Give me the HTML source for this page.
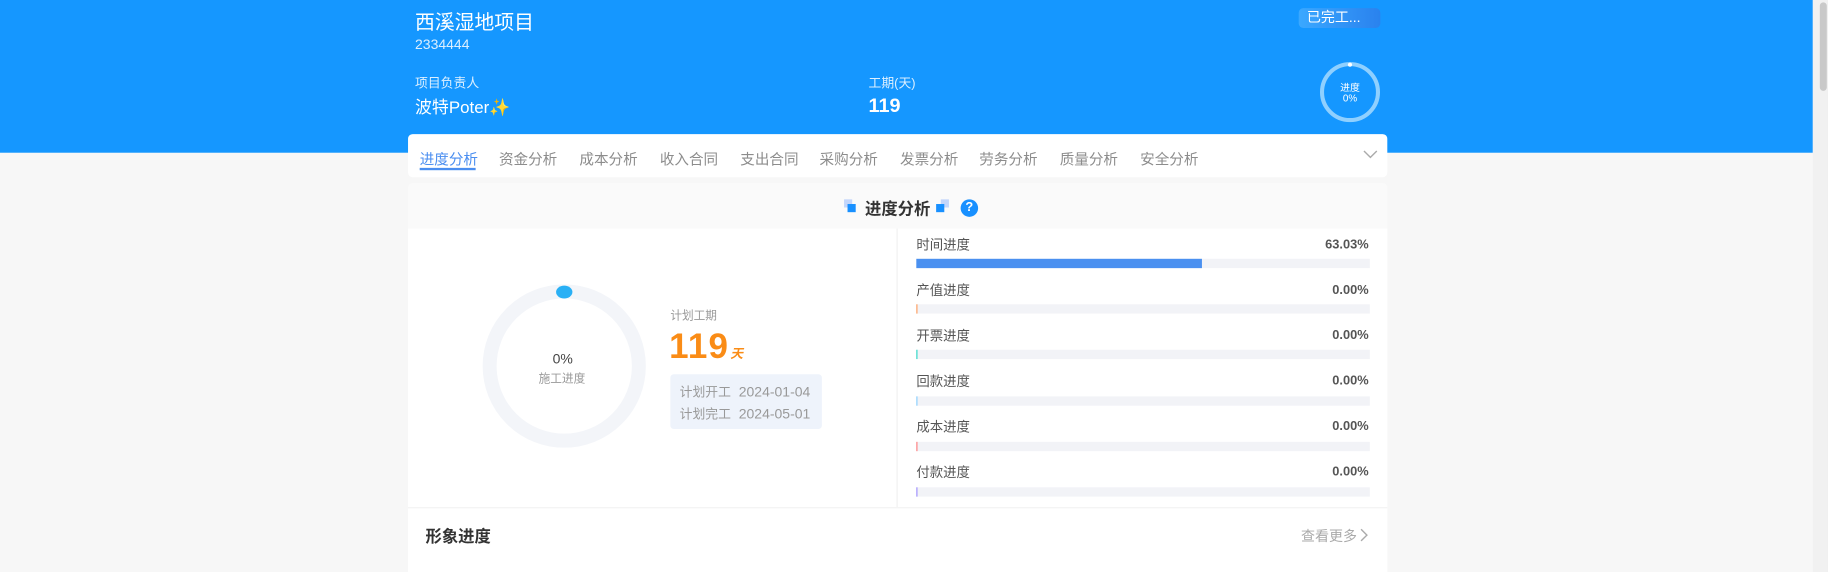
<!DOCTYPE html>
<html><head><meta charset="utf-8"><style>
*{margin:0;padding:0;box-sizing:border-box}
html,body{width:1828px;height:572px;overflow:hidden;background:#f7f7f7;font-family:"Liberation Sans","Noto Sans CJK SC",sans-serif}
#w{position:absolute;left:0;top:0;width:1568px;height:491px;transform:scale(1.1658);transform-origin:0 0;background:#f7f7f7}
.a{position:absolute;white-space:nowrap}
.hdr{left:0;top:0;width:1555px;height:131px;background:#1597ff}
.sb{left:1555px;top:0;width:13px;height:491px;background:#f1f1f1}
.th{left:1561px;top:2px;width:6px;height:76px;background:#c9c9c9;border-radius:3px}
.w{color:#fff}
.tabs{left:350px;top:115px;width:840px;height:37px;background:#fff;border-radius:4px}
.tab{top:126px;font-size:12.5px;color:#8c8c8c}
.card{left:350px;top:157px;width:840px;height:334px;background:#fafafa;border-radius:4px}
.bar{left:786px;width:389px;height:8px;background:#f2f3f7}
.lb{left:786px;font-size:11.5px;color:#555}
.pc{right:394px;font-size:11px;font-weight:bold;color:#555}
</style></head><body><div id="w">
<div class="a hdr"></div>
<div class="a sb"></div><div class="a th"></div>
<div class="a w" style="left:356px;top:5px;font-size:17px">西溪湿地项目</div>
<div class="a w" style="left:356px;top:31px;font-size:12px;opacity:.85">2334444</div>
<div class="a w" style="left:356px;top:63px;font-size:11px;opacity:.85">项目负责人</div>
<div class="a w" style="left:356px;top:81px;font-size:14.5px">波特Poter<span style="color:#ffc83d">✨</span></div>
<div class="a w" style="left:745px;top:63px;font-size:11px;opacity:.85">工期(天)</div>
<div class="a w" style="left:745px;top:81px;font-size:17px;font-weight:bold">119</div>
<div class="a w" style="left:1114px;top:7px;width:70px;height:17px;border-radius:4px;background:linear-gradient(90deg,#3aa8ff,#2a82ee);font-size:12px;padding-left:7px;line-height:17px">已完工...</div>
<svg class="a" style="left:1132px;top:53px" width="52" height="52"><circle cx="26" cy="26" r="24" fill="none" stroke="#8fd0ff" stroke-width="3.5"/><circle cx="26" cy="2.5" r="1.8" fill="#fff"/><text x="26" y="25" font-size="8.5" fill="#fff" text-anchor="middle" font-family="Liberation Sans,Noto Sans CJK SC,sans-serif">进度</text><text x="26" y="34" font-size="8.5" fill="#fff" text-anchor="middle" font-family="Liberation Sans,sans-serif">0%</text></svg>
<div class="a tabs"></div>
<div class="a tab" style="left:360px;color:#4a8ef0">进度分析</div>
<div class="a" style="left:360px;top:144px;width:48px;height:2px;background:#4a8ef0"></div>
<div class="a tab" style="left:428px">资金分析</div>
<div class="a tab" style="left:497px">成本分析</div>
<div class="a tab" style="left:566px">收入合同</div>
<div class="a tab" style="left:635px">支出合同</div>
<div class="a tab" style="left:703px">采购分析</div>
<div class="a tab" style="left:772px">发票分析</div>
<div class="a tab" style="left:840px">劳务分析</div>
<div class="a tab" style="left:909px">质量分析</div>
<div class="a tab" style="left:978px">安全分析</div>
<svg class="a" style="left:1169px;top:128px" width="13" height="9"><path d="M1 1.5L6.5 7L12 1.5" fill="none" stroke="#aaa" stroke-width="1.2"/></svg>
<div class="a card"></div>
<div class="a" style="left:724px;top:171px;width:7px;height:7px;background:#c3d6fb"></div>
<div class="a" style="left:727px;top:175px;width:7px;height:7px;background:#1890ff"></div>
<div class="a" style="left:742px;top:169px;font-size:14px;font-weight:bold;color:#333">进度分析</div>
<div class="a" style="left:807px;top:171px;width:7px;height:7px;background:#c3d6fb"></div>
<div class="a" style="left:803px;top:175px;width:7px;height:7px;background:#1890ff"></div>
<div class="a" style="left:824px;top:171px;width:15px;height:15px;border-radius:50%;background:#1890ff;color:#fff;font-size:11px;font-weight:bold;text-align:center;line-height:15px">?</div>
<div class="a" style="left:350px;top:196px;width:840px;height:239px;background:#fff"></div>
<div class="a" style="left:769px;top:196px;width:1px;height:239px;background:#f0f0f0"></div>
<div class="a" style="left:350px;top:435px;width:840px;height:56px;background:#fff;border-top:1px solid #f2f2f2"></div>
<svg class="a" style="left:412px;top:244px" width="144" height="144"><circle cx="72" cy="70" r="64" fill="none" stroke="#f3f5f9" stroke-width="12"/><ellipse cx="72" cy="6.5" rx="7" ry="5.5" fill="#29b0f5"/></svg>
<div class="a" style="left:474px;top:301px;font-size:12px;color:#444">0%</div>
<div class="a" style="left:462px;top:316px;font-size:10px;color:#999">施工进度</div>
<div class="a" style="left:575px;top:262px;font-size:10px;color:#999">计划工期</div>
<div class="a" style="left:574px;top:281px;font-size:30px;font-weight:bold;color:#fa8c16;letter-spacing:1px">119<span style="font-size:11px;font-style:italic;margin-left:1px">天</span></div>
<div class="a" style="left:575px;top:321px;width:130px;height:47px;background:#eef3fb;border-radius:3px"></div>
<div class="a" style="left:583px;top:328px;font-size:12px;color:#999"><span style="font-size:11px">计划开工</span>&nbsp; 2024-01-04</div>
<div class="a" style="left:583px;top:347px;font-size:12px;color:#999"><span style="font-size:11px">计划完工</span>&nbsp; 2024-05-01</div>

<div class="a lb" style="top:202px">时间进度</div><div class="a pc" style="top:204px">63.03%</div>
<div class="a bar" style="top:222px"><div style="width:245px;height:8px;background:#4a90f0"></div></div>
<div class="a lb" style="top:241px">产值进度</div><div class="a pc" style="top:243px">0.00%</div>
<div class="a bar" style="top:261px"><div style="width:1px;height:8px;background:#ffa060"></div></div>
<div class="a lb" style="top:280px">开票进度</div><div class="a pc" style="top:282px">0.00%</div>
<div class="a bar" style="top:300px"><div style="width:1px;height:8px;background:#30d8c8"></div></div>
<div class="a lb" style="top:319px">回款进度</div><div class="a pc" style="top:321px">0.00%</div>
<div class="a bar" style="top:340px"><div style="width:1px;height:8px;background:#8cd0ff"></div></div>
<div class="a lb" style="top:358px">成本进度</div><div class="a pc" style="top:360px">0.00%</div>
<div class="a bar" style="top:379px"><div style="width:1px;height:8px;background:#ff8080"></div></div>
<div class="a lb" style="top:397px">付款进度</div><div class="a pc" style="top:399px">0.00%</div>
<div class="a bar" style="top:418px"><div style="width:1px;height:8px;background:#a090ff"></div></div>

<div class="a" style="left:365px;top:450px;font-size:14px;font-weight:bold;color:#333">形象进度</div>
<div class="a" style="left:1116px;top:451px;font-size:12px;color:#aaa">查看更多</div>
<svg class="a" style="left:1166px;top:453px" width="8" height="12"><path d="M1.5 1L6.5 6L1.5 11" fill="none" stroke="#aaa" stroke-width="1.2"/></svg>
</div></body></html>
